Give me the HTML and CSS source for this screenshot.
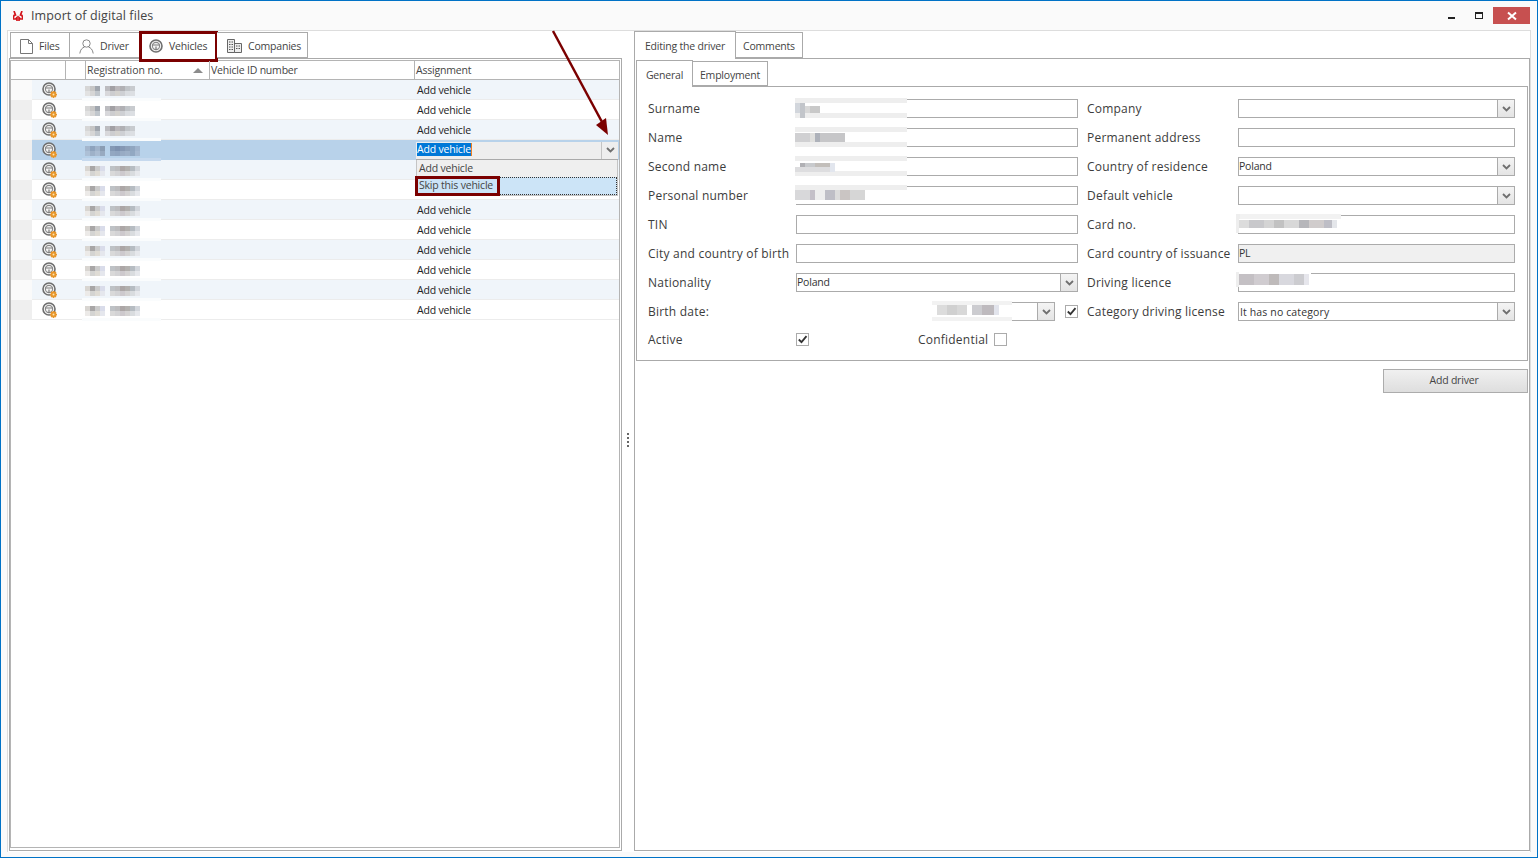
FILE: index.html
```html
<!DOCTYPE html>
<html lang="en">
<head>
    <meta charset="UTF-8">
    <title>Import of digital files</title>
    <link rel="stylesheet" href="styles.css">
</head>
<body>
<!-- shared icons and pixelated plates -->
<svg class="defs" width="0" height="0">
    <symbol id="wheel" viewBox="0 0 14 14">
        <circle cx="7" cy="7" r="6" fill="#f4f4f4" stroke="#6e6e6e" stroke-width="1.6"/>
        <circle cx="7" cy="7" r="3.6" fill="none" stroke="#8a8a8a" stroke-width="1.1"/>
        <path d="M3.4 6h7.2M7 7.5v3.5" fill="none" stroke="#7a7a7a" stroke-width="1.2"/>
    </symbol>
    <symbol id="gear" viewBox="0 0 8 8">
        <path d="M3 0h2v1.2l1.3-.6 1 1-.6 1.4H8v2H6.700l.6 1.300-1 1L5 6.700V8H3V6.700l-1.300.6-1-1L1.300 5H0V3h1.300l-.6-1.400 1-1L3 1.200z" fill="#e8962a"/>
        <circle cx="4" cy="4" r="1.100" fill="#fbe3b0"/>
    </symbol>
    <symbol id="chev" viewBox="0 0 9 6">
        <path d="M1 1l3.500 3.500L8 1" fill="none" stroke="#6f6f6f" stroke-width="1.800"/>
    </symbol>
    <symbol id="plate-a" viewBox="0 0 55 10">
        <g shape-rendering="crispEdges">
            <rect x="0" width="5" height="5" fill="#d6d6d6"/><rect x="5" width="5" height="5" fill="#c6c6c6"/><rect x="10" width="5" height="5" fill="#a0a6ae"/>
            <rect x="20" width="5" height="5" fill="#bcbcc0"/><rect x="25" width="5" height="5" fill="#a2a0a4"/><rect x="30" width="5" height="5" fill="#bab7ba"/><rect x="35" width="5" height="5" fill="#b0b0b4"/><rect x="40" width="5" height="5" fill="#c0c4c8"/><rect x="45" width="5" height="5" fill="#c8cbcf"/>
            <rect x="0" y="5" width="5" height="5" fill="#e2e2e2"/><rect x="5" y="5" width="5" height="5" fill="#d6d6d6"/><rect x="10" y="5" width="5" height="5" fill="#c0c6cc"/>
            <rect x="20" y="5" width="5" height="5" fill="#d8d8db"/><rect x="25" y="5" width="5" height="5" fill="#cdcdcf"/><rect x="30" y="5" width="5" height="5" fill="#d4d2ce"/><rect x="35" y="5" width="5" height="5" fill="#ced0d4"/><rect x="40" y="5" width="5" height="5" fill="#dadde1"/><rect x="45" y="5" width="5" height="5" fill="#dcdfe3"/>
        </g>
    </symbol>
    <symbol id="plate-b" viewBox="0 0 55 10">
        <g shape-rendering="crispEdges">
            <rect x="0" width="5" height="5" fill="#d8d5d1"/><rect x="5" width="5" height="5" fill="#a8a6a6"/><rect x="10" width="5" height="5" fill="#cacaca"/><rect x="15" width="5" height="5" fill="#d9dcea"/>
            <rect x="25" width="5" height="5" fill="#bec2c6"/><rect x="30" width="5" height="5" fill="#bcbcbe"/><rect x="35" width="5" height="5" fill="#aca6a6"/><rect x="40" width="5" height="5" fill="#b2b0ae"/><rect x="45" width="5" height="5" fill="#b6bcc2"/><rect x="50" width="5" height="5" fill="#d2d6dc"/>
            <rect x="0" y="5" width="5" height="5" fill="#eceae8"/><rect x="5" y="5" width="5" height="5" fill="#d4d4d2"/><rect x="10" y="5" width="5" height="5" fill="#dfdcd5"/><rect x="15" y="5" width="5" height="5" fill="#e5e7ed"/>
            <rect x="25" y="5" width="5" height="5" fill="#d9d9d9"/><rect x="30" y="5" width="5" height="5" fill="#d3d3d5"/><rect x="35" y="5" width="5" height="5" fill="#cdc9cd"/><rect x="40" y="5" width="5" height="5" fill="#d5d3d3"/><rect x="45" y="5" width="5" height="5" fill="#d9dcdf"/><rect x="50" y="5" width="5" height="5" fill="#e6e8ec"/>
        </g>
    </symbol>
    <symbol id="plate-sel" viewBox="0 0 55 10">
        <g shape-rendering="crispEdges">
            <rect x="0" width="5" height="5" fill="#a3b6cd"/><rect x="5" width="5" height="5" fill="#8ea3bd"/><rect x="10" width="5" height="5" fill="#a0b3ca"/><rect x="15" width="5" height="5" fill="#8b9db3"/>
            <rect x="0" y="5" width="5" height="5" fill="#adc0d6"/><rect x="5" y="5" width="5" height="5" fill="#9eb1c8"/><rect x="10" y="5" width="5" height="5" fill="#a9bbd1"/><rect x="15" y="5" width="5" height="5" fill="#98aac0"/>
            <rect x="25" width="5" height="5" fill="#8499b5"/><rect x="30" width="5" height="5" fill="#7d91af"/><rect x="35" width="5" height="5" fill="#8497b3"/><rect x="40" width="5" height="5" fill="#8da0b9"/><rect x="45" width="5" height="5" fill="#90a6c0"/><rect x="50" width="5" height="5" fill="#9fb3cc"/>
            <rect x="25" y="5" width="5" height="5" fill="#93a7c1"/><rect x="30" y="5" width="5" height="5" fill="#90a4bf"/><rect x="35" y="5" width="5" height="5" fill="#98abc4"/><rect x="40" y="5" width="5" height="5" fill="#9cafc7"/><rect x="45" y="5" width="5" height="5" fill="#92a8c2"/><rect x="50" y="5" width="5" height="5" fill="#a5b8d0"/>
        </g>
    </symbol>
</svg>

<div class="window">
    <div class="titlebar">
        <svg class="app-icon" width="10" height="10" viewBox="0 0 10 10">
            <path d="M1 0l1.500 4L1 4.500 0 8h2.500L4 6.500V10M9 0L7.500 4 9 4.500l1 3.500H7.500L6 6.500V10" fill="none" stroke="#d3141b" stroke-width="1.700"/>
        </svg>
        <span class="title">Import of digital files</span>
        <div class="win-controls">
            <span class="win-min"></span>
            <span class="win-max"></span>
            <span class="win-close">
                <svg width="10" height="10" viewBox="0 0 10 10"><path d="M1 1.500l8 7M9 1.500l-8 7" stroke="#fff" stroke-width="2"/></svg>
            </span>
        </div>
    </div>

    <div class="main">
        <!-- left side -->
        <div class="pane pane-left">
            <div class="tabs">
                <div class="tab tab-files">
                    <svg width="13" height="15" viewBox="0 0 13 15"><path d="M.5.500h8l4 4v10H.5zM8.500.500v4h4" fill="#fff" stroke="#777"/></svg>
                    Files
                </div>
                <div class="tab tab-driver">
                    <svg width="15" height="15" viewBox="0 0 15 15"><circle cx="7.500" cy="4.500" r="3.700" fill="none" stroke="#888"/><path d="M.8 14.500c.5-4 2.700-6 4.700-6.400M14.200 14.500c-.5-4-2.700-6-4.700-6.400" fill="none" stroke="#888"/></svg>
                    Driver
                </div>
                <div class="tab tab-vehicles active marked">
                    <svg width="14" height="14"><use href="#wheel"/></svg>
                    Vehicles
                </div>
                <div class="tab tab-companies">
                    <svg width="15" height="14" viewBox="0 0 15 14">
                        <path d="M.5.500h7v13h-7zM7.500 4.500h7v9h-7z" fill="#eee" stroke="#666"/>
                        <path d="M2 3h1.500M4.500 3H6M2 5.500h1.500M4.500 5.500H6M2 8h1.500M4.500 8H6M2 10.500h1.500M4.500 10.500H6M9 7h1.500M11.500 7H13M9 9.500h1.500M11.500 9.500H13" stroke="#555"/>
                    </svg>
                    Companies
                </div>
            </div>
            <div class="panel panel-left">
                <div class="grid">
                    <div class="grid-head">
                        <div class="hcell"></div>
                        <div class="hcell"></div>
                        <div class="hcell hcell-sort">Registration no.<span class="sort-up"></span></div>
                        <div class="hcell">Vehicle ID number</div>
                        <div class="hcell hcell-last">Assignment</div>
                    </div>
                    <div class="row odd"><i class="ind"></i><div class="ic"><svg class="wheel" width="14" height="14"><use href="#wheel"/></svg><svg class="gear" width="7" height="7"><use href="#gear"/></svg></div><div class="plate"><svg width="55" height="10"><use href="#plate-a"/></svg></div><div class="assign">Add vehicle</div></div>
                    <div class="row"><i class="ind"></i><div class="ic"><svg class="wheel" width="14" height="14"><use href="#wheel"/></svg><svg class="gear" width="7" height="7"><use href="#gear"/></svg></div><div class="plate"><svg width="55" height="10"><use href="#plate-a"/></svg></div><div class="assign">Add vehicle</div></div>
                    <div class="row odd"><i class="ind"></i><div class="ic"><svg class="wheel" width="14" height="14"><use href="#wheel"/></svg><svg class="gear" width="7" height="7"><use href="#gear"/></svg></div><div class="plate"><svg width="55" height="10"><use href="#plate-a"/></svg></div><div class="assign">Add vehicle</div></div>
                    <div class="row selected"><i class="ind"></i><div class="ic"><svg class="wheel" width="14" height="14"><use href="#wheel"/></svg><svg class="gear" width="7" height="7"><use href="#gear"/></svg></div><div class="plate"><svg width="55" height="10"><use href="#plate-sel"/></svg></div>
                        <div class="assign-edit">
                            <span class="sel-text">Add vehicle</span>
                            <span class="edit-btn"><svg width="9" height="6"><use href="#chev"/></svg></span>
                            <div class="dropdown">
                                <div class="dd-item">Add vehicle</div>
                                <div class="dd-item dd-hot">Skip this vehicle</div>
                            </div>
                        </div>
                    </div>
                    <div class="row odd"><i class="ind"></i><div class="ic"><svg class="wheel" width="14" height="14"><use href="#wheel"/></svg><svg class="gear" width="7" height="7"><use href="#gear"/></svg></div><div class="plate"><svg width="55" height="10"><use href="#plate-b"/></svg></div><div class="assign"></div></div>
                    <div class="row"><i class="ind"></i><div class="ic"><svg class="wheel" width="14" height="14"><use href="#wheel"/></svg><svg class="gear" width="7" height="7"><use href="#gear"/></svg></div><div class="plate"><svg width="55" height="10"><use href="#plate-b"/></svg></div><div class="assign"></div></div>
                    <div class="row odd"><i class="ind"></i><div class="ic"><svg class="wheel" width="14" height="14"><use href="#wheel"/></svg><svg class="gear" width="7" height="7"><use href="#gear"/></svg></div><div class="plate"><svg width="55" height="10"><use href="#plate-b"/></svg></div><div class="assign">Add vehicle</div></div>
                    <div class="row"><i class="ind"></i><div class="ic"><svg class="wheel" width="14" height="14"><use href="#wheel"/></svg><svg class="gear" width="7" height="7"><use href="#gear"/></svg></div><div class="plate"><svg width="55" height="10"><use href="#plate-b"/></svg></div><div class="assign">Add vehicle</div></div>
                    <div class="row odd"><i class="ind"></i><div class="ic"><svg class="wheel" width="14" height="14"><use href="#wheel"/></svg><svg class="gear" width="7" height="7"><use href="#gear"/></svg></div><div class="plate"><svg width="55" height="10"><use href="#plate-b"/></svg></div><div class="assign">Add vehicle</div></div>
                    <div class="row"><i class="ind"></i><div class="ic"><svg class="wheel" width="14" height="14"><use href="#wheel"/></svg><svg class="gear" width="7" height="7"><use href="#gear"/></svg></div><div class="plate"><svg width="55" height="10"><use href="#plate-b"/></svg></div><div class="assign">Add vehicle</div></div>
                    <div class="row odd"><i class="ind"></i><div class="ic"><svg class="wheel" width="14" height="14"><use href="#wheel"/></svg><svg class="gear" width="7" height="7"><use href="#gear"/></svg></div><div class="plate"><svg width="55" height="10"><use href="#plate-b"/></svg></div><div class="assign">Add vehicle</div></div>
                    <div class="row"><i class="ind"></i><div class="ic"><svg class="wheel" width="14" height="14"><use href="#wheel"/></svg><svg class="gear" width="7" height="7"><use href="#gear"/></svg></div><div class="plate"><svg width="55" height="10"><use href="#plate-b"/></svg></div><div class="assign">Add vehicle</div></div>
                </div>
            </div>
        </div>

        <!-- splitter -->
        <div class="splitter"><i></i><i></i><i></i><i></i></div>

        <!-- right side -->
        <div class="pane pane-right">
            <div class="tabs tabs-right">
                <div class="tab active">Editing the driver</div>
                <div class="tab">Comments</div>
            </div>
            <div class="panel panel-right">
                <div class="tabs tabs-inner">
                    <div class="tab active">General</div>
                    <div class="tab">Employment</div>
                </div>
                <div class="form-box">
                    <div class="form">
                        <label>Surname</label>
                        <div class="field"><svg class="blur" width="112" height="20"><rect width="112" height="5" fill="#eee"/><rect width="112" height="5" y="15" fill="#eee"/><rect width="112" height="10" y="5" fill="#fff"/><g shape-rendering="crispEdges"><rect x="0" y="5" width="5" height="10" fill="#d2d6dc"/><rect x="5" y="5" width="5" height="15" fill="#c2c5ca"/><rect x="10" y="8" width="5" height="7" fill="#d8d8d8"/><rect x="15" y="8" width="10" height="7" fill="#c8c8c8"/></g></svg></div>
                        <label>Company</label>
                        <div class="field combo"><span class="combo-btn"><svg width="9" height="6"><use href="#chev"/></svg></span></div>

                        <label>Name</label>
                        <div class="field"><svg class="blur" width="112" height="20"><rect width="112" height="5" fill="#eee"/><rect width="112" height="5" y="15" fill="#eee"/><rect width="112" height="10" y="5" fill="#fff"/><g shape-rendering="crispEdges"><rect x="0" y="6" width="15" height="9" fill="#d0d0d2"/><rect x="15" y="6" width="5" height="9" fill="#e0e0de"/><rect x="20" y="6" width="5" height="9" fill="#aeb2ba"/><rect x="25" y="6" width="25" height="9" fill="#c6c6c8"/></g></svg></div>
                        <label>Permanent address</label>
                        <div class="field"></div>

                        <label>Second name</label>
                        <div class="field"><svg class="blur" width="112" height="20"><rect width="112" height="5" fill="#eee"/><rect width="112" height="5" y="15" fill="#eee"/><rect width="112" height="10" y="5" fill="#fff"/><g shape-rendering="crispEdges"><rect x="5" y="7" width="5" height="4" fill="#b0b0b4"/><rect x="10" y="7" width="10" height="4" fill="#c8cacd"/><rect x="20" y="7" width="15" height="4" fill="#c2beba"/><rect x="0" y="11" width="35" height="5" fill="#dddddf"/><rect x="35" y="7" width="5" height="9" fill="#e2e6ee"/></g></svg></div>
                        <label>Country of residence</label>
                        <div class="field combo"><span class="val">Poland</span><span class="combo-btn"><svg width="9" height="6"><use href="#chev"/></svg></span></div>

                        <label>Personal number</label>
                        <div class="field"><svg class="blur" width="112" height="20"><rect width="112" height="5" fill="#eee"/><rect width="112" height="14" y="5" fill="#fff"/><g shape-rendering="crispEdges"><rect x="0" y="5" width="15" height="10" fill="#d8d8da"/><rect x="15" y="5" width="5" height="10" fill="#c4c0c8"/><rect x="20" y="5" width="10" height="10" fill="#eeeeee"/><rect x="30" y="5" width="10" height="10" fill="#bebec6"/><rect x="40" y="5" width="5" height="10" fill="#dcdcdc"/><rect x="45" y="5" width="10" height="10" fill="#cac5c3"/><rect x="55" y="5" width="15" height="10" fill="#d6d6d6"/></g></svg></div>
                        <label>Default vehicle</label>
                        <div class="field combo"><span class="combo-btn"><svg width="9" height="6"><use href="#chev"/></svg></span></div>

                        <label>TIN</label>
                        <div class="field"></div>
                        <label>Card no.</label>
                        <div class="field"><svg class="blur blur-card" width="105" height="19"><rect width="105" height="5" fill="#f2f2f2"/><rect width="4" height="19" fill="#eee"/><rect x="3" y="5" width="102" height="14" fill="#fff"/><g shape-rendering="crispEdges"><rect x="3" y="6" width="10" height="8" fill="#dcdcdc"/><rect x="13" y="6" width="15" height="8" fill="#c8c8cb"/><rect x="28" y="6" width="10" height="8" fill="#d4d4d4"/><rect x="38" y="6" width="10" height="8" fill="#c2c2c2"/><rect x="48" y="6" width="15" height="8" fill="#d8d8d8"/><rect x="63" y="6" width="10" height="8" fill="#b6b6ba"/><rect x="73" y="6" width="15" height="8" fill="#d0cccc"/><rect x="88" y="6" width="8" height="8" fill="#bebec6"/><rect x="96" y="6" width="5" height="8" fill="#e4e6ea"/></g></svg></div>

                        <label>City and country of birth</label>
                        <div class="field"></div>
                        <label>Card country of issuance</label>
                        <div class="field field-off"><span class="val">PL</span></div>

                        <label>Nationality</label>
                        <div class="field combo"><span class="val">Poland</span><span class="combo-btn"><svg width="9" height="6"><use href="#chev"/></svg></span></div>
                        <label>Driving licence</label>
                        <div class="field"><svg class="blur blur-lic" width="75" height="15"><rect width="4" height="15" fill="#eee"/><rect x="3" width="72" height="15" fill="#fff"/><g shape-rendering="crispEdges"><rect x="3" y="2" width="15" height="11" fill="#c4c0c4"/><rect x="18" y="2" width="15" height="11" fill="#d0ccd0"/><rect x="33" y="2" width="10" height="11" fill="#bebaba"/><rect x="43" y="2" width="15" height="11" fill="#d8d8de"/><rect x="58" y="2" width="10" height="11" fill="#ccccd0"/><rect x="68" y="2" width="5" height="11" fill="#e6e6ec"/></g></svg></div>

                        <label>Birth date:</label>
                        <div class="birth-cell">
                            <div class="field combo combo-date"><svg class="blur" width="80" height="20"><rect width="80" height="20" fill="#f2f2f2"/><rect y="4" x="0" width="80" height="12" fill="#fff"/><g shape-rendering="crispEdges"><rect x="5" y="4" width="10" height="10" fill="#dcdcdc"/><rect x="15" y="4" width="10" height="10" fill="#d0d0d0"/><rect x="25" y="4" width="10" height="10" fill="#d8d8d8"/><rect x="40" y="4" width="10" height="10" fill="#ccccd0"/><rect x="50" y="4" width="12" height="10" fill="#bebabe"/><rect x="62" y="4" width="5" height="10" fill="#e2e4ec"/></g></svg><span class="combo-btn"><svg width="9" height="6"><use href="#chev"/></svg></span></div>
                            <span class="check on"><svg width="11" height="11" viewBox="0 0 11 11"><path d="M1.800 5.500l2.700 2.700 5-6" fill="none" stroke="#333" stroke-width="1.800"/></svg></span>
                        </div>
                        <label>Category driving license</label>
                        <div class="field combo"><span class="val val-cat">It has no category</span><span class="combo-btn"><svg width="9" height="6"><use href="#chev"/></svg></span></div>

                        <label class="last-row">Active</label>
                        <div class="active-cell last-row">
                            <span class="check on"><svg width="11" height="11" viewBox="0 0 11 11"><path d="M1.800 5.500l2.700 2.700 5-6" fill="none" stroke="#333" stroke-width="1.800"/></svg></span>
                            <span class="conf-label">Confidential</span>
                            <span class="check"></span>
                        </div>
                    </div>
                </div>
                <div class="actions">
                    <button class="btn" type="button">Add driver</button>
                </div>
            </div>
        </div>
    </div>

    <!-- annotation arrow -->
    <svg class="arrow" width="70" height="115" viewBox="0 0 70 115">
        <path d="M2 2l49 91" stroke="#7b0000" stroke-width="2.500" fill="none"/>
        <path d="M57 106L45 96l10-7z" fill="#7b0000"/>
    </svg>
</div>
</body>
</html>
```

FILE: styles.css
```css
* {
    box-sizing: border-box;
}

html, body {
    height: 100%;
    margin: 0;
    overflow: hidden;
    font-family: "Open Sans", "Noto Sans", sans-serif;
    color: #3c3c3c;
}

.defs {
    position: absolute;
}

/* window frame */
.window {
    position: relative;
    height: 858px;
    display: flex;
    flex-direction: column;
    background-color: #fafafa;
    border: 1px solid #0072c6;
}

.titlebar {
    height: 29px;
    display: flex;
    align-items: center;
    flex-shrink: 0;
    padding-left: 12px;
}

.app-icon {
    margin-right: 8px;
}

.title {
    font-size: 12.5px;
    letter-spacing: 0.1px;
    color: #444;
}

.win-controls {
    margin-left: auto;
    margin-right: 7px;
    height: 17px;
    display: flex;
    align-items: flex-start;
}

.win-min {
    width: 7px;
    height: 2px;
    background-color: #222;
    margin-top: 10px;
    margin-right: 20px;
}

.win-max {
    width: 8px;
    height: 7px;
    margin-top: 5px;
    margin-right: 10px;
    border: 1px solid #222;
    border-top-width: 2px;
}

.win-close {
    width: 37px;
    height: 17px;
    background-color: #c75050;
    display: flex;
    align-items: center;
    justify-content: center;
}

.main {
    flex: 1;
    display: flex;
    margin: 0 6px 5px 6px;
    background-color: #fff;
    border-top: 1px solid #ddd;
    border-left: 1px solid #ddd;
    border-right: 1px solid #ddd;
    min-height: 0;
}

.pane {
    display: flex;
    flex-direction: column;
}

.pane-left {
    width: 613px;
    margin-left: 1px;
    padding-top: 2px;
    padding-bottom: 1px;
}

.pane-right {
    width: 896px;
    padding-bottom: 1px;
}

/* tabs */
.tabs {
    display: flex;
    align-items: flex-end;
    flex-shrink: 0;
    height: 26px;
    padding-left: 1px;
    border-bottom: 1px solid #aaa;
}

.tab {
    position: relative;
    height: 26px;
    display: flex;
    align-items: center;
    gap: 6px;
    padding-top: 2px;
    font-size: 10.5px;
    letter-spacing: -0.2px;
    color: #444;
    background-color: #fff;
    border: 1px solid #aaa;
    border-left: none;
}

.tab:first-child {
    border-left: 1px solid #aaa;
}

.tab.active {
    border-bottom: none;
    margin-bottom: -1px;
    padding-top: 0;
    padding-bottom: 1px;
}

.tab-files {
    width: 60px;
    padding-left: 9px;
}

.tab-driver {
    width: 70px;
    padding-left: 9px;
}

.tab-vehicles {
    width: 77px;
    padding-left: 9px;
}

.tab-companies {
    width: 91px;
    padding-left: 10px;
}

.marked::after {
    content: "";
    position: absolute;
    left: -1px;
    top: -3px;
    right: -2px;
    bottom: -3px;
    border: 3px solid #7b0000;
}

.tabs-right {
    height: 28px;
    padding-left: 0;
}

.tabs-right .tab {
    width: 67px;
    justify-content: center;
    height: 26px;
}

.tabs-right .tab.active {
    width: 102px;
    height: 28px;
    padding-bottom: 0;
    border-left: 1px solid #aaa;
}

.tabs-inner {
    padding-left: 0;
    height: 27px;
    margin-top: 1px;
}

.tabs-inner .tab {
    width: 75px;
    justify-content: center;
    height: 25px;
}

.tabs-inner .tab.active {
    width: 57px;
    height: 27px;
    padding-top: 1px;
    padding-bottom: 0;
}

.panel {
    flex: 1;
    display: flex;
    flex-direction: column;
    background-color: #fff;
    border: 1px solid #aaa;
    border-top: none;
}

.panel-left {
    padding: 1px 1px 2px 0;
}

.panel-right {
    padding: 0 1px 0 1px;
}

/* vehicles grid */
.grid {
    flex: 1;
    border: 1px solid #b4b4b4;
    font-size: 10.5px;
    letter-spacing: -0.2px;
    color: #222;
}

.grid-head {
    display: grid;
    grid-template-columns: 55px 20px 124px 205px 204px;
    height: 19px;
    border-bottom: 1px solid #b4b4b4;
}

.hcell {
    position: relative;
    display: flex;
    align-items: center;
    padding-left: 1px;
    padding-bottom: 1px;
    color: #444;
    border-right: 1px solid #b4b4b4;
}

.hcell-sort {
    letter-spacing: -0.08px;
}

.hcell-last {
    border-right: none;
}

.sort-up {
    position: absolute;
    right: 6px;
    top: 7px;
    border-left: 5px solid transparent;
    border-right: 5px solid transparent;
    border-bottom: 5px solid #8c8c8c;
}

.row {
    display: grid;
    grid-template-columns: 21px 53px 331px 203px;
    height: 20px;
    align-items: center;
    background-color: #fff;
    border-bottom: 1px solid #ececec;
}

.row.odd {
    background-color: #f0f5fa;
}

.ind {
    display: block;
    height: 20px;
    background-color: #efefef;
}

.row.odd .ind {
    background-color: #fafafa;
}

.ic {
    position: relative;
    height: 20px;
}

.wheel {
    position: absolute;
    left: 10px;
    top: 2px;
}

.gear {
    position: absolute;
    left: 18px;
    top: 11px;
}

.plate {
    position: relative;
    height: 20px;
    display: flex;
    align-items: center;
}

.plate svg {
    position: relative;
    top: 1px;
}

/* pale band the pixelation left under each plate */
.plate::after {
    content: "";
    position: absolute;
    left: -3px;
    bottom: -1px;
    width: 79px;
    height: 3px;
    background-color: #fafcfd;
}

.assign {
    padding-left: 1px;
}

.row.selected {
    background-color: #b8d2ea;
    border-bottom: none;
}

.row.selected .ind {
    background-color: #efefef;
}

.row.selected .plate::after {
    background-color: #c6d9ee;
}

.assign-edit {
    position: relative;
    height: 18px;
    margin-top: 1px;
    margin-right: 1px;
    background-color: #eee;
    border-bottom: 1px solid #aaa;
    display: flex;
    align-items: center;
    padding-left: 1px;
}

.sel-text {
    position: relative;
    top: -1px;
    background-color: #0078d7;
    color: #fff;
    border-right: 1px solid #f08020;
    line-height: 13px;
}

.edit-btn {
    margin-left: auto;
    width: 17px;
    height: 17px;
    display: flex;
    align-items: center;
    justify-content: center;
    border-left: 1px solid #c4c4c4;
}

/* popup list of the assignment cell */
.dropdown {
    position: absolute;
    left: 0;
    top: 18px;
    width: 202px;
    height: 36px;
    background-color: #efefef;
    border: 1px solid #c4c4c4;
    border-top: none;
    color: #444;
    z-index: 2;
}

.dd-item {
    height: 17px;
    display: flex;
    align-items: center;
    padding-left: 2px;
    padding-bottom: 1px;
}

.dd-hot {
    position: relative;
    height: 18px;
    padding-left: 1px;
    background-color: #cce4f7;
    border: 1px dotted #333;
}

.dd-hot::after {
    content: "";
    position: absolute;
    left: -3px;
    top: -2px;
    width: 79px;
    height: 14px;
    border: 3px solid #7b0000;
}

/* splitter */
.splitter {
    width: 12px;
    display: flex;
    flex-direction: column;
    align-items: center;
    justify-content: center;
    gap: 2px;
    padding-bottom: 4px;
}

.splitter i {
    display: block;
    width: 2px;
    height: 2px;
    background-color: #666;
}

/* driver form */
.form-box {
    border: 1px solid #aaa;
    border-top: none;
    padding: 12px 0 10px 11px;
}

.form {
    display: grid;
    grid-template-columns: 148px 282px 160px 277px;
    grid-auto-rows: 19px;
    row-gap: 10px;
    font-size: 12px;
}

.form label {
    display: flex;
    align-items: center;
    letter-spacing: 0.22px;
}

.form label:nth-child(4n+3) {
    margin-left: 9px;
}

.last-row {
    margin-top: -2px;
}

.field {
    position: relative;
    height: 19px;
    display: flex;
    align-items: center;
    background-color: #fff;
    border: 1px solid #ababab;
    font-size: 10.5px;
    letter-spacing: -0.2px;
    color: #333;
}

.field-off {
    background-color: #f0f0f0;
}

.val {
    padding-bottom: 1px;
}

.val-cat {
    padding-left: 1px;
    padding-bottom: 0;
    letter-spacing: 0.13px;
}

.combo-btn {
    margin-left: auto;
    width: 17px;
    height: 17px;
    display: flex;
    align-items: center;
    justify-content: center;
    border-left: 1px solid #ababab;
    background: linear-gradient(#f4f4f4, #e4e4e4);
}

/* pixelated values lie over the field border */
.blur {
    position: absolute;
    left: -2px;
    top: -2px;
}

.blur-card {
    top: -2px;
    left: -3px;
}

.blur-lic {
    top: -2px;
    left: -3px;
}

.birth-cell {
    display: flex;
    align-items: center;
    justify-content: flex-end;
    gap: 10px;
}

.combo-date {
    width: 122px;
}

.check {
    width: 13px;
    height: 13px;
    display: inline-flex;
    align-items: center;
    justify-content: center;
    flex-shrink: 0;
    background-color: #fff;
    border: 1px solid #ababab;
}

.active-cell {
    display: flex;
    align-items: center;
}

.conf-label {
    margin-left: 109px;
    margin-right: 6px;
    letter-spacing: 0.22px;
}

.actions {
    display: flex;
    justify-content: flex-end;
    margin-top: 8px;
}

.btn {
    width: 145px;
    height: 24px;
    padding: 0 3px 2px 0;
    font-family: inherit;
    font-size: 10.5px;
    letter-spacing: -0.2px;
    color: #444;
    background: linear-gradient(#f0f0f0, #dedede);
    border: 1px solid #acacac;
}

/* annotation */
.arrow {
    position: absolute;
    left: 550px;
    top: 28px;
    z-index: 3;
}
```
